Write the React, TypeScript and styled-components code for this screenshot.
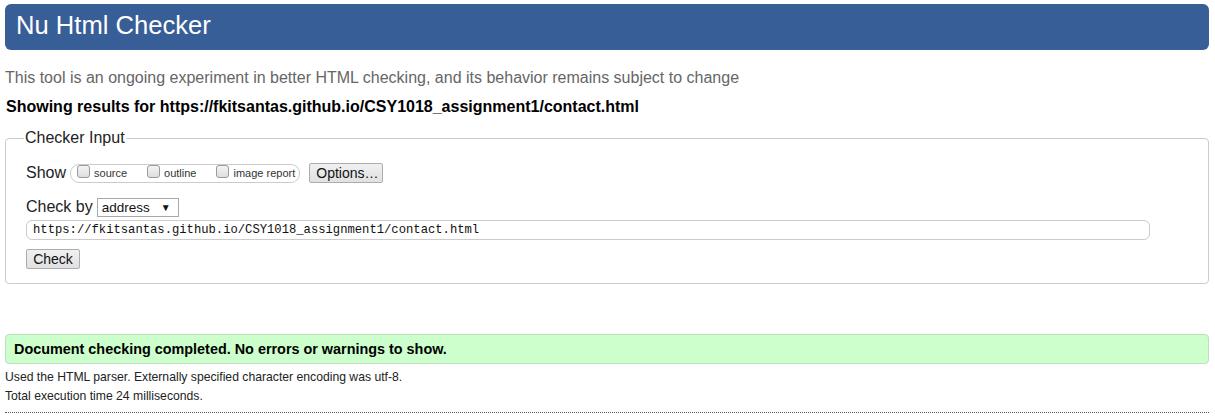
import React from 'react'
import styled, { createGlobalStyle } from 'styled-components'

const GlobalStyle = createGlobalStyle`
  html, body {
    margin: 0;
    padding: 0;
    background: #fff;
  }
  body {
    font-family: "Liberation Sans", Arial, sans-serif;
    font-size: 16px;
    color: #000;
  }
`

const Page = styled.div`
  padding: 4px 6px 0 5px;
`

const Header = styled.header`
  height: 46px;
  background: #375e97;
  border-radius: 6px;
  display: flex;
  align-items: center;
  padding-left: 11px;
`

const Title = styled.h1`
  margin: 0 0 2px;
  font-size: 25.6px;
  font-weight: normal;
  color: #fff;
  line-height: 1;
`

const Intro = styled.p`
  margin: 19px 0 0;
  color: #666;
  font-size: 16px;
  line-height: 18px;
`

const Results = styled.p`
  margin: 11px 0 0;
  font-weight: bold;
  font-size: 16px;
  line-height: 18px;
  padding-left: 1px;
`

const Fieldset = styled.fieldset`
  margin: 13px 0 0;
  padding: 0 20px 14px;
  border: 1px solid #ccc;
  border-radius: 4px;
  min-width: 0;
`

const Legend = styled.legend`
  padding: 0 1px;
  margin-left: -2px;
  font-size: 16px;
  line-height: 18px;
  color: #222;
`

const Row = styled.div<{ $top: number }>`
  display: flex;
  align-items: center;
  margin-top: ${p => p.$top}px;
  height: 20px;
`

const RowLabel = styled.span`
  font-size: 16px;
  margin-right: 4px;
  color: #222;
`

const Pill = styled.span`
  display: inline-flex;
  align-items: center;
  height: 17px;
  border: 1px solid #ccc;
  border-radius: 9px;
  padding: 0 4px 0 6px;
`

const Option = styled.label`
  display: inline-flex;
  align-items: center;
  font-size: 11px;
  color: #333;
  margin-right: 20px;
  &:last-child {
    margin-right: 0;
  }
`

const Box = styled.span`
  width: 11px;
  height: 11px;
  border: 1px solid #9a9a9a;
  border-radius: 3px;
  background: linear-gradient(#f4f4f4, #dedede);
  margin-right: 4px;
  margin-top: -3px;
`

const Button = styled.button`
  font-family: "Liberation Sans", Arial, sans-serif;
  font-size: 14px;
  height: 20px;
  padding: 0 6px;
  border: 1px solid #acacac;
  border-radius: 2px;
  background: linear-gradient(#f0f0f0, #e1e1e1);
  color: #111;
  line-height: 18px;
`

const OptionsButton = styled(Button)`
  margin-left: 9px;
  width: 74px;
`

const Select = styled.span`
  display: inline-flex;
  align-items: center;
  justify-content: space-between;
  width: 82px;
  height: 19px;
  box-sizing: border-box;
  border: 1px solid #a9a9a9;
  padding: 0 7px 0 4px;
  font-size: 13.5px;
  color: #111;
`

const Arrow = styled.span`
  font-size: 10px;
`

const UrlInput = styled.div`
  margin-top: 3px;
  height: 20px;
  width: 1124px;
  box-sizing: border-box;
  border: 1px solid #ccc;
  border-radius: 6px;
  padding-left: 6px;
  display: flex;
  align-items: center;
  font-family: "Liberation Mono", "DejaVu Sans Mono", monospace;
  font-size: 12.2px;
  color: #111;
`

const CheckRow = styled.div`
  margin-top: 9px;
`

const CheckButton = styled(Button)`
  width: 54px;
`

const Success = styled.div`
  margin-top: 50px;
  height: 30px;
  box-sizing: border-box;
  background: #ccffcc;
  border: 1px solid #bde0bd;
  border-radius: 4px;
  display: flex;
  align-items: center;
  padding-left: 8px;
  font-weight: bold;
  font-size: 14.4px;
`

const Details = styled.p`
  margin: 0;
  font-size: 12.2px;
  line-height: 19px;
  color: #222;
  &:first-of-type {
    margin-top: 4px;
  }
`

const Rule = styled.hr`
  margin: 6px 0 0;
  border: 0;
  border-top: 1px dotted #555;
  height: 0;
`

const checks = ['source', 'outline', 'image report']

const App = () => {
  return (
    <>
      <GlobalStyle />
      <Page>
        <Header>
          <Title>Nu Html Checker</Title>
        </Header>
        <Intro>This tool is an ongoing experiment in better HTML checking, and its behavior remains subject to change</Intro>
        <Results>Showing results for https://fkitsantas.github.io/CSY1018_assignment1/contact.html</Results>
        <Fieldset>
          <Legend>Checker Input</Legend>
          <Row $top={16}>
            <RowLabel>Show</RowLabel>
            <Pill>
              {checks.map(c => (
                <Option key={c}>
                  <Box />
                  {c}
                </Option>
              ))}
            </Pill>
            <OptionsButton>Options…</OptionsButton>
          </Row>
          <Row $top={14}>
            <RowLabel>Check by</RowLabel>
            <Select>
              address
              <Arrow>▼</Arrow>
            </Select>
          </Row>
          <UrlInput>https://fkitsantas.github.io/CSY1018_assignment1/contact.html</UrlInput>
          <CheckRow>
            <CheckButton>Check</CheckButton>
          </CheckRow>
        </Fieldset>
        <Success>Document checking completed. No errors or warnings to show.</Success>
        <div>
          <Details>Used the HTML parser. Externally specified character encoding was utf-8.</Details>
          <Details>Total execution time 24 milliseconds.</Details>
        </div>
        <Rule />
      </Page>
    </>
  )
}

export default App
